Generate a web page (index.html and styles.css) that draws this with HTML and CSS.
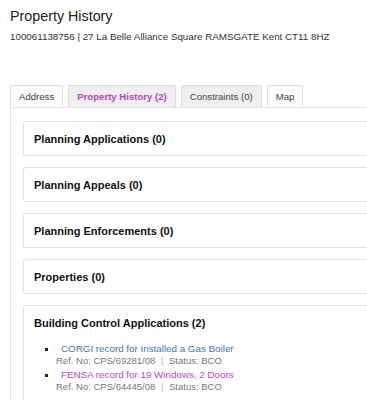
FILE: index.html
```html
<!DOCTYPE html>
<html lang="en">
<head>
    <meta charset="UTF-8">
    <title>Property History</title>
    <link rel="stylesheet" href="styles.css">
</head>
<body>
    <div id="page">
        <h1 class="title">Property History</h1>
        <p class="address">100061138756 | 27 La Belle Alliance Square RAMSGATE Kent CT11 8HZ</p>

        <!-- tabs -->
        <ul class="tabs">
            <li class="tab">Address</li>
            <li class="tab grey active">Property History (2)</li>
            <li class="tab grey">Constraints (0)</li>
            <li class="tab">Map</li>
        </ul>

        <div class="tab-body">
            <div class="card"><h3>Planning Applications (0)</h3></div>
            <div class="card"><h3>Planning Appeals (0)</h3></div>
            <div class="card"><h3>Planning Enforcements (0)</h3></div>
            <div class="card"><h3>Properties (0)</h3></div>
            <div class="card">
                <h3>Building Control Applications (2)</h3>
                <ul class="records">
                    <li>
                        <a href="#" class="link">CORGI record for Installed a Gas Boiler</a>
                        <div class="ref">Ref. No: CPS/69281/08 <span class="sep">|</span> Status: BCO</div>
                    </li>
                    <li>
                        <a href="#" class="link visited">FENSA record for 19 Windows, 2 Doors</a>
                        <div class="ref">Ref. No: CPS/64445/08 <span class="sep">|</span> Status: BCO</div>
                    </li>
                </ul>
            </div>
        </div>
    </div>
</body>
</html>
```

FILE: styles.css
```css
*{
    margin: 0;
    padding: 0;
    box-sizing: border-box;
}
html, body{
    overflow: hidden;
}
body{
    background: #fff;
    font-family: "Liberation Sans", Arial, sans-serif;
    color: #333;
    width: 367px;
    height: 400px;
}
#page{
    padding: 7px 0 0 10px;
    width: 420px;
}
.title{
    font-size: 14.3px;
    font-weight: normal;
    line-height: 18px;
    color: #222;
}
.address{
    font-size: 9.8px;
    line-height: 12px;
    margin-top: 6px;
    color: #333;
}
.tabs{
    list-style: none;
    display: flex;
    gap: 5px;
    margin-top: 42px;
    height: 22px;
}
.tab{
    font-size: 9.6px;
    line-height: 22px;
    padding: 0 8px;
    border: 1px solid #ddd;
    border-bottom: none;
    border-radius: 2px 2px 0 0;
    background: #fbfbfb;
    color: #444;
}
.tab.grey{
    background: #efefef;
}
.tab.active{
    color: #c43dc9;
    font-weight: bold;
}
.tab-body{
    border: 1px solid #e4e4e4;
    border-right: none;
    padding: 13px 0 12px 12px;
    display: flex;
    flex-direction: column;
    gap: 11px;
}
.card{
    border: 1px solid #e2e2e2;
    border-right: none;
    border-radius: 3px 0 0 3px;
    padding: 11px 0 10px 10px;
    min-height: 35px;
}
.card h3{
    font-size: 11px;
    line-height: 12px;
    font-weight: bold;
    color: #111;
}
.records{
    list-style: none;
    margin-top: 14px;
    padding-left: 11px;
}
.records li{
    position: relative;
    margin-bottom: 3px;
}
.records li::before{
    content: '';
    position: absolute;
    left: 0;
    top: 5px;
    width: 3px;
    height: 3px;
    background: #222;
}
.link{
    display: block;
    font-size: 9.8px;
    line-height: 12px;
    padding-left: 16px;
    color: #3b7bb4;
    text-decoration: none;
}
.link.visited{
    color: #c246c7;
}
.ref{
    font-size: 9.5px;
    line-height: 11px;
    padding-left: 11px;
    color: #777;
}
.sep{
    color: #bbb;
    margin: 0 3px;
}
```
